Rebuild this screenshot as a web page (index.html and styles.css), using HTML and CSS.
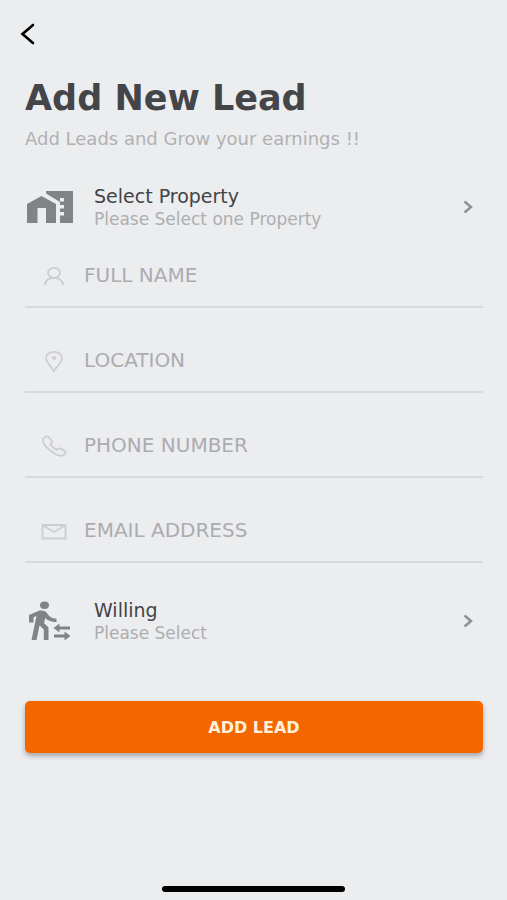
FILE: index.html
```html
<!DOCTYPE html>
<html lang="en">
<head>
<meta charset="utf-8">
<meta name="viewport" content="width=device-width, initial-scale=1">
<title>Add New Lead</title>
<link rel="stylesheet" href="styles.css">
</head>
<body>
<div class="screen">
  <header class="topbar">
    <button class="back" type="button" aria-label="Back">
      <svg width="16" height="22" viewBox="0 0 16 22" fill="none" stroke="currentColor" stroke-width="2.6" stroke-linecap="round" stroke-linejoin="miter"><path d="M13 2 2.5 11 13 20"/></svg>
    </button>
  </header>
  <main class="content">
    <h1 class="title">Add New Lead</h1>
    <p class="subtitle">Add Leads and Grow your earnings !!</p>
    <form class="form">
      <button class="picker" type="button">
        <svg class="picker-icon" width="46" height="34" viewBox="0 0 46 34" fill="currentColor"><path d="M0 14 14.500 6 29 14V33H19V18H10.500V33H0Z"/><path fill-rule="evenodd" d="M19 1H46V33H33V12L19 3.500ZM33 8H37V11.500H33ZM33 15H37V18.500H33ZM33 22H37V25.500H33Z"/></svg>
        <span class="picker-text"><span class="picker-label">Select Property</span><span class="picker-hint">Please Select one Property</span></span>
        <svg class="chevron" width="10" height="14" viewBox="0 0 10 14" fill="none" stroke="currentColor" stroke-width="2.5"><path d="M1.500 1.500 8 7 1.500 12.500"/></svg>
      </button>
      <div class="fields">
        <label class="field">
          <svg class="field-icon" width="26" height="24" viewBox="0 0 26 24"><ellipse cx="13" cy="8.800" rx="6" ry="5"/><path d="M4 21C4.500 16 8 13.800 13 13.800S21.500 16 22 21"/></svg>
          <input class="input" type="text" name="name" placeholder="FULL NAME" aria-label="Full name">
        </label>
        <label class="field">
          <svg class="field-icon" width="26" height="24" viewBox="0 0 26 24"><path d="M13 22C10.500 17.500 5 13.500 5 9.500 5 5.500 8.500 2.800 13 2.800S21 5.500 21 9.500C21 13.500 15.500 17.500 13 22Z"/><ellipse cx="13" cy="9" rx="1.200" ry="1"/></svg>
          <input class="input" type="text" name="location" placeholder="LOCATION" aria-label="Location">
        </label>
        <label class="field">
          <svg class="field-icon" width="26" height="24" viewBox="0 0 26 24"><path d="M2 5C3.500 3 5.500 2 7 2.500L11 7C11.500 8 10.500 9 9.500 9.800 10.500 12.500 13 14.500 16 15.800 17 15 18 14 19.500 14.500L24.500 17.500C25.500 18.800 23.500 20.500 22 21.500 18.500 23 11.500 18.800 8 15.500 4.500 12.500 1 8.500 2 5Z"/></svg>
          <input class="input" type="tel" name="phone" placeholder="PHONE NUMBER" aria-label="Phone number">
        </label>
        <label class="field">
          <svg class="field-icon" width="26" height="24" viewBox="0 0 26 24"><path d="M1.500 6H24.500V19.500H1.500ZM1.500 6 13 13 24.500 6"/></svg>
          <input class="input" type="email" name="email" placeholder="EMAIL ADDRESS" aria-label="Email address">
        </label>
      </div>
      <button class="picker" type="button">
        <svg class="picker-icon" width="46" height="40" viewBox="0 0 46 40" fill="currentColor"><ellipse cx="17.500" cy="4.200" rx="4.500" ry="3.700"/><path d="M2 14 12 9.800C16 8.800 18.500 10 20 12 22 15.300 24.500 17.500 29.500 17.800V21.200C24.500 21 20.500 19.500 18.300 17L17 22 21.500 26.500V39H16.800V28.500L12.500 24.500 9.500 39H4.500L9.500 15 6.500 16.200V21.500H2Z"/><path d="M26.500 27 32.500 22.500V25.500H43V28.500H32.500V31.500ZM43.500 35 37.500 30.500V33.500H27V36.500H37.500V39.500Z"/></svg>
        <span class="picker-text"><span class="picker-label">Willing</span><span class="picker-hint">Please Select</span></span>
        <svg class="chevron" width="10" height="14" viewBox="0 0 10 14" fill="none" stroke="currentColor" stroke-width="2.5"><path d="M1.500 1.500 8 7 1.500 12.500"/></svg>
      </button>
      <button class="submit" type="submit">ADD LEAD</button>
    </form>
  </main>
  <div class="home-bar"></div>
</div>
</body>
</html>
```

FILE: styles.css
```css
* {
  box-sizing: border-box;
}

body {
  margin: 0;
  background: #ecedef;
  color: #434447;
  font-family: "DejaVu Sans", "Liberation Sans", sans-serif;
}

button,
input {
  margin: 0;
  padding: 0;
  border: 0;
  background: none;
  color: inherit;
  font: inherit;
}

button {
  cursor: pointer;
}

.screen {
  display: flex;
  flex-direction: column;
  min-height: 100vh;
}

.topbar {
  padding: 20px 20px 0;
}

.back {
  display: flex;
  align-items: center;
  height: 28px;
  color: #000;
}

.content {
  flex: 1;
  padding: 28px 24px 0 25px;
}

.title {
  margin: 0;
  font-size: 35px;
  font-weight: 700;
  line-height: 44px;
  color: #444548;
}

.subtitle {
  margin: 7px 0 0;
  font-size: 18px;
  line-height: 24px;
  color: #b0b1b4;
}

.form {
  display: flex;
  flex-direction: column;
  margin-top: 26px;
}

.picker {
  display: flex;
  align-items: center;
  gap: 21px;
  height: 60px;
  padding: 0 10px 0 2px;
  text-align: left;
}

.picker-icon {
  flex: none;
  color: #828386;
}

.picker-text {
  display: flex;
  flex: 1;
  flex-direction: column;
}

.picker-label {
  font-size: 19px;
  line-height: 24px;
}

.picker-hint {
  font-size: 17px;
  line-height: 22px;
  color: #adaeb1;
}

.chevron {
  flex: none;
  color: #909194;
}

.fields {
  display: flex;
  flex-direction: column;
  gap: 21px;
  margin: 7px 0 28px;
}

.field {
  display: flex;
  align-items: center;
  gap: 17px;
  height: 64px;
  padding-left: 16px;
  border-bottom: 2px solid #d8d9db;
}

.field-icon {
  flex: none;
  margin-top: 2px;
  fill: none;
  stroke: #cccdcf;
  stroke-width: 1.8;
}

.input {
  flex: 1;
  min-width: 0;
  height: 100%;
  outline: 0;
  font-size: 20px;
}

.input::placeholder {
  color: #abacb0;
  opacity: 1;
}

.submit {
  height: 52px;
  margin-top: 50px;
  border-radius: 5px;
  background: #f46600;
  box-shadow: 0 3px 5px rgba(60, 60, 70, 0.4);
  color: #fff0dc;
  font-size: 16px;
  font-weight: 700;
}

.home-bar {
  align-self: center;
  width: 36%;
  height: 6px;
  margin: 24px 0 8px;
  border-radius: 3px;
  background: #000;
}
```
